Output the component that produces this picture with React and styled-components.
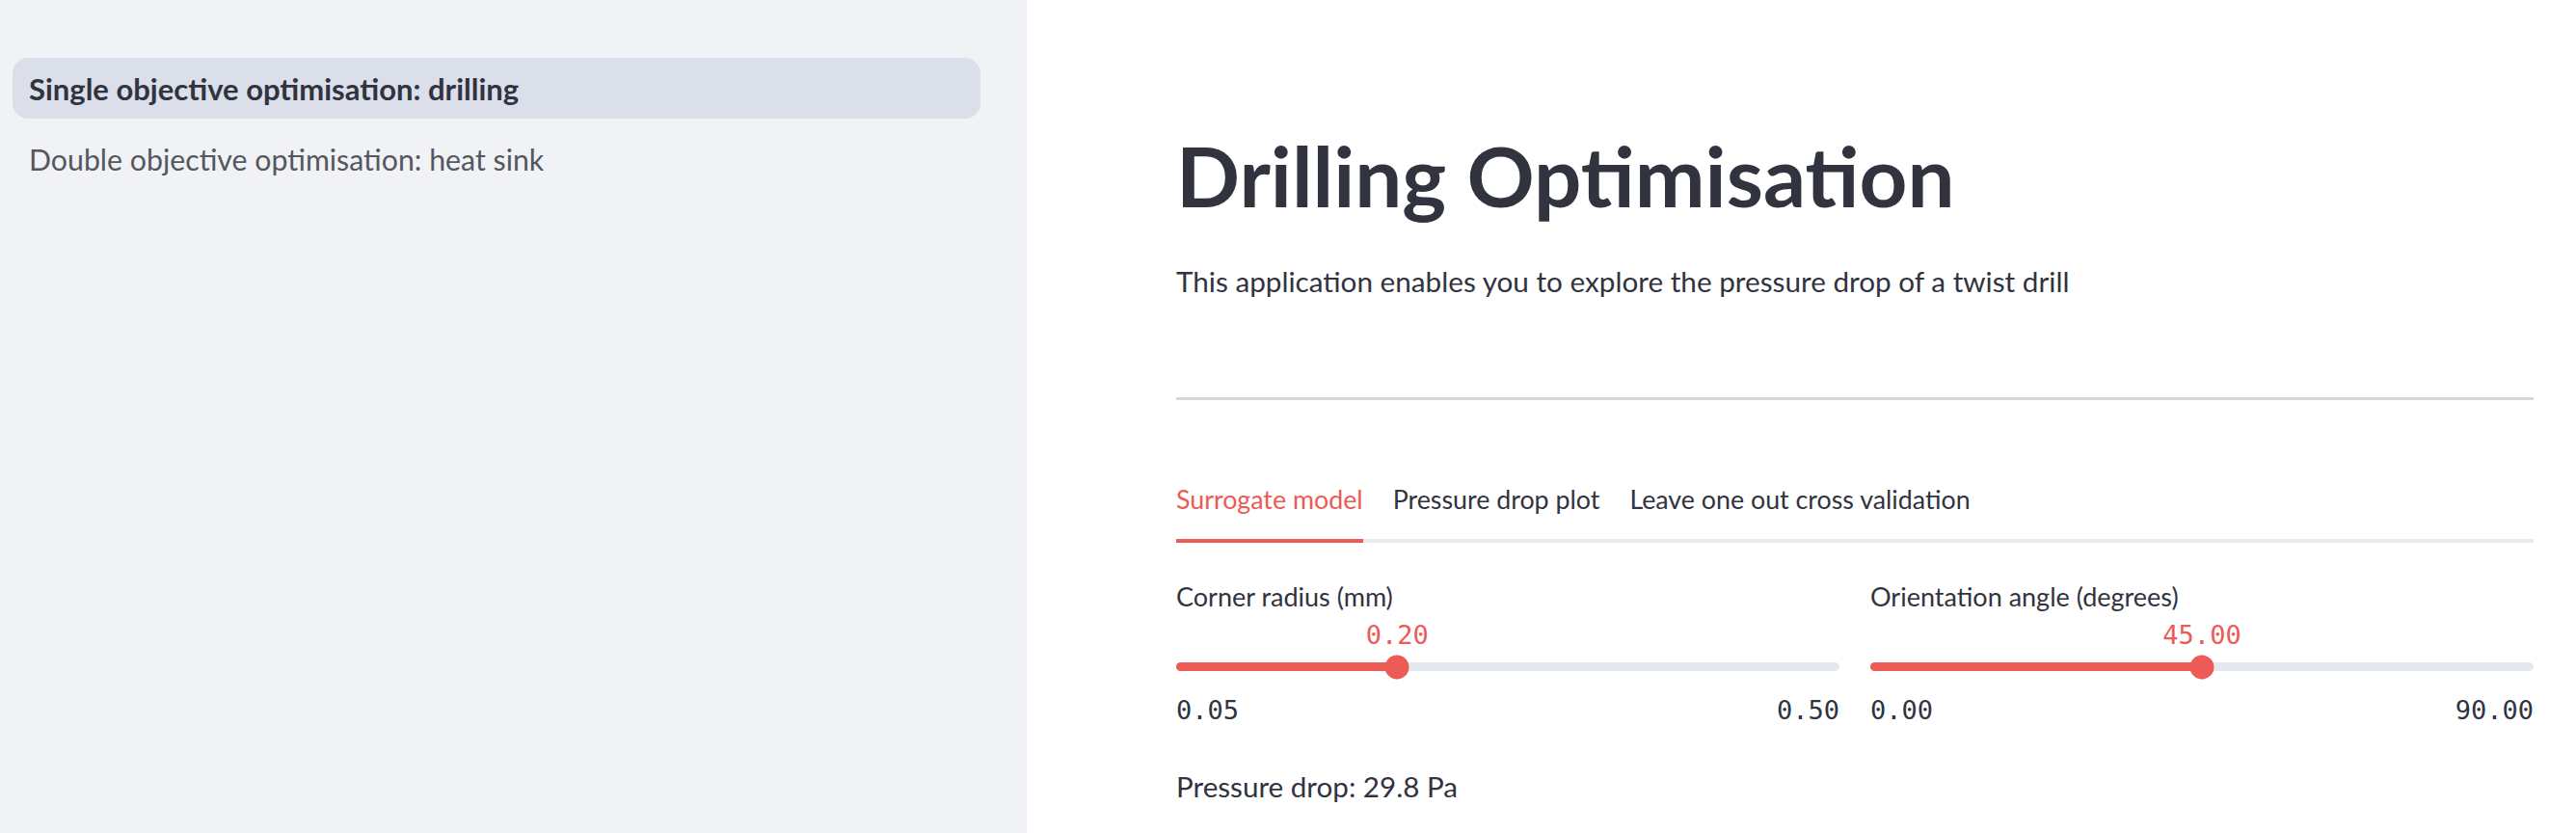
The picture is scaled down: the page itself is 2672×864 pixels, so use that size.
import React from 'react';
import styled, { createGlobalStyle } from 'styled-components';

const GlobalStyle = createGlobalStyle`
  html, body { margin: 0; padding: 0; background: #ffffff; }
  body { font-family: Lato, "Noto Sans", sans-serif; color: #31333f; }
  * { box-sizing: border-box; }
`

const Page = styled.div`
display: flex;
width: 2672px;
height: 864px;
overflow: hidden;
`
const Sidebar = styled.nav`
flex: none;
width: 1065px;
background: #f0f2f6;
padding: 60px 48px 0 13px;
display: flex;
flex-direction: column;
gap: 10px;
`
const NavItem = styled.div`
height: 63px;
border-radius: 16px;
padding-left: 17px;
display: flex;
align-items: center;
font-size: ${props => props.active ? '31px' : '30.3px'};
font-weight: ${props => props.active ? 700 : 400};
color: ${props => props.active ? '#31333f' : '#55575f'};
background: ${props => props.active ? '#dadfe9' : 'transparent'};
`
const Main = styled.main`
flex: 1;
padding: 0 44px 0 155px;
`
const Title = styled.h1`
margin: 134px 0 0;
font-size: 87px;
line-height: 96px;
font-weight: 700;
color: #31333f;
`
const Intro = styled.p`
margin: 42px 0 0;
font-size: 29.7px;
line-height: 40px;
`
const Divider = styled.hr`
margin: 100px 0 0;
border: none;
border-top: 3px solid #d6d6d8;
`
const TabBar = styled.div`
margin-top: 83px;
display: flex;
gap: 31px;
border-bottom: 4px solid #eaeaea;
`
const Tab = styled.div`
font-size: 26.8px;
line-height: 40px;
padding-bottom: 21px;
margin-bottom: -4px;
color: ${props => props.active ? '#ec5b55' : '#31333f'};
border-bottom: 4px solid ${props => props.active ? '#ec5b55' : 'transparent'};
`
const Columns = styled.div`
margin-top: 36px;
display: grid;
grid-template-columns: 1fr 1fr;
gap: 32px;
`
const SliderLabel = styled.div`
font-size: 27px;
line-height: 40px;
`
const ValueRow = styled.div`
position: relative;
height: 40px;
`
const ValueBubble = styled.span`
position: absolute;
top: 4px;
transform: translateX(-50%);
font-family: "DejaVu Sans Mono", "Liberation Mono", monospace;
font-size: 27px;
line-height: 32px;
color: #ec5b55;
`
const Track = styled.div`
position: relative;
height: 9px;
border-radius: 5px;
background: #e6e8ef;
margin-top: 8px;
`
const Fill = styled.div`
height: 100%;
border-radius: 5px;
background: #ec5b55;
`
const Thumb = styled.div`
position: absolute;
top: 50%;
width: 25px;
height: 25px;
border-radius: 50%;
background: #ec5b55;
transform: translate(-50%, -50%);
`
const Limits = styled.div`
display: flex;
justify-content: space-between;
margin-top: 25px;
font-family: "DejaVu Sans Mono", "Liberation Mono", monospace;
font-size: 27px;
line-height: 32px;
color: #31333f;
`
const Result = styled.p`
margin: 43px 0 0;
font-size: 29.6px;
line-height: 40px;
`

function Slider({ label, min, max, value }) {
    const pct = ((value - min) / (max - min)) * 100;
    return (
        <div>
            <SliderLabel>{label}</SliderLabel>
            <ValueRow>
                <ValueBubble style={{ left: pct + '%' }}>{value.toFixed(2)}</ValueBubble>
            </ValueRow>
            <Track>
                <Fill style={{ width: pct + '%' }} />
                <Thumb style={{ left: pct + '%' }} />
            </Track>
            <Limits>
                <span>{min.toFixed(2)}</span>
                <span>{max.toFixed(2)}</span>
            </Limits>
        </div>
    );
}

function App() {
    const tabs = ['Surrogate model', 'Pressure drop plot', 'Leave one out cross validation'];
    return (
        <Page>
            <GlobalStyle />
            <Sidebar>
                <NavItem active>Single objective optimisation: drilling</NavItem>
                <NavItem>Double objective optimisation: heat sink</NavItem>
            </Sidebar>
            <Main>
                <Title>Drilling Optimisation</Title>
                <Intro>This application enables you to explore the pressure drop of a twist drill</Intro>
                <Divider />
                <TabBar>
                    {tabs.map((t, i) => <Tab key={t} active={i === 0}>{t}</Tab>)}
                </TabBar>
                <Columns>
                    <Slider label="Corner radius (mm)" min={0.05} max={0.5} value={0.2} />
                    <Slider label="Orientation angle (degrees)" min={0} max={90} value={45} />
                </Columns>
                <Result>Pressure drop: 29.8 Pa</Result>
            </Main>
        </Page>
    );
}

export default App;
